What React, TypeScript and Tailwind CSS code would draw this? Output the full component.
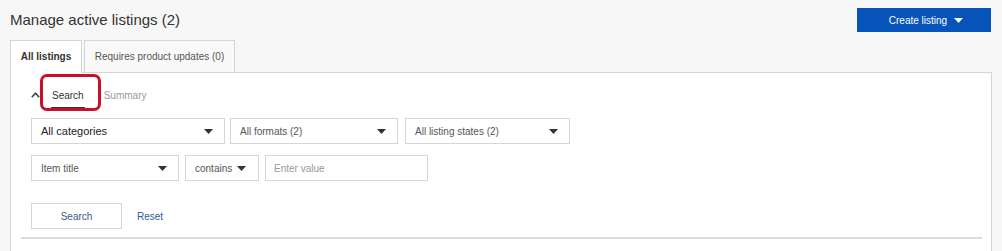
import React from "react";

const Caret = ({ className = "" }: { className?: string }) => (
  <svg width="9" height="5" viewBox="0 0 9 5" className={className}>
    <path d="M0 0 L9 0 L4.5 5 Z" fill="#333" />
  </svg>
);

const Select = ({ label, w, bold, pr = "pr-[11px]" }: { label: string; w: string; bold?: boolean; pr?: string }) => (
  <div className={`${w} ${pr} h-[26px] border border-[#d6d6d6] bg-white flex items-center justify-between pl-[9px]`}>
    <span className={bold ? "text-[11px] text-[#222]" : "text-[10px] text-[#555]"}>{label}</span>
    <Caret />
  </div>
);

export default function App() {
  return (
    <div
      className="relative w-[1002px] h-[251px] overflow-hidden bg-[#f7f7f7]"
      style={{ fontFamily: '"Liberation Sans", Arial, sans-serif' }}
    >
      <div className="flex justify-between items-start pl-[10px] pr-[11px] pt-[8px]">
        <h1 className="text-[15px] leading-[22px] text-[#333] pt-[1px]">Manage active listings (2)</h1>
        <button className="w-[134px] h-[24px] bg-[#0654ba] text-white text-[10px] flex items-center justify-center gap-[7px] pl-[4px]">
          Create listing
          <svg width="9" height="5" viewBox="0 0 9 5">
            <path d="M0 0 L9 0 L4.5 5 Z" fill="#fff" />
          </svg>
        </button>
      </div>
      <div className="flex ml-[10px] mt-[8px] items-end">
        <div className="w-[72px] h-[33px] bg-white border border-b-0 border-[#d6d6d6] flex items-center justify-center text-[10px] font-bold text-[#333] relative z-10 -mb-px pb-px">
          All listings
        </div>
        <div className="ml-[2px] w-[151px] h-[32px] bg-[#f9f9f9] border border-b-0 border-[#d6d6d6] flex items-center justify-center text-[10px] text-[#555]">
          Requires product updates (0)
        </div>
      </div>
      <div className="ml-[10px] w-[982px] h-[200px] bg-white border border-[#d6d6d6] pl-[20px] pr-[10px]">
        <div className="flex items-center h-[44px] pt-[2px]">
          <svg width="9" height="6" viewBox="0 0 9 6" className="-mt-[2px]">
            <path d="M0.8 5.2 L4.5 1.2 L8.2 5.2" fill="none" stroke="#444" strokeWidth="1.6" />
          </svg>
          <div className="ml-[12px] relative text-[10px] text-[#333] pb-[2px]">
            Search
            <div className="absolute -left-[1px] -right-[1px] -bottom-[4px] h-[2px] bg-[#333]" />
          </div>
          <div className="ml-[20px] text-[10px] text-[#999] pb-[2px]">Summary</div>
        </div>
        <div className="flex mt-[1px]">
          <Select label="All categories" w="w-[194px]" bold />
          <div className="ml-[5px]">
            <Select label="All formats (2)" w="w-[168px]" />
          </div>
          <div className="ml-[7px]">
            <Select label="All listing states (2)" w="w-[165px]" />
          </div>
        </div>
        <div className="flex gap-[6px] mt-[11px]">
          <Select label="Item title" w="w-[148px]" />
          <Select label="contains" w="w-[74px]" pr="pr-[12px]" />
          <div className="w-[163px] h-[26px] border border-[#d6d6d6] bg-white flex items-center pl-[8px] text-[10px] text-[#999]">
            Enter value
          </div>
        </div>
        <div className="flex items-center mt-[22px]">
          <button className="w-[91px] h-[26px] border border-[#d6d6d6] bg-white text-[10px] text-[#3b5a86]">Search</button>
          <span className="ml-[15px] text-[10px] text-[#2d5a9b]">Reset</span>
        </div>
        <div className="mt-[8px] -ml-[10px] w-[961px] h-[2px] bg-[#dcdcdc]" />
      </div>
      <div className="absolute left-[40px] top-[74px] w-[61px] h-[37px] border-[3px] border-[#c8102e] rounded-[7px]" />
    </div>
  );
}
